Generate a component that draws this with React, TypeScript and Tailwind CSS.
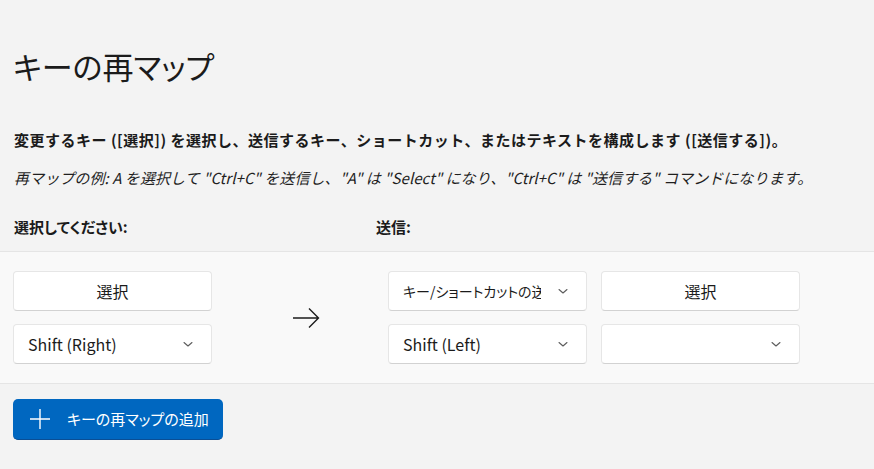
import React from "react";

const font = "font-['Noto_Sans_CJK_JP',sans-serif]";

function Chevron() {
  return (
    <svg width="12" height="12" viewBox="0 0 12 12" className="shrink-0">
      <path d="M2 4.5 L6 8 L10 4.5" fill="none" stroke="#5c5c5c" strokeWidth="1.1" strokeLinecap="round" strokeLinejoin="round" />
    </svg>
  );
}

function Button({ label }: { label: string }) {
  return (
    <div className="h-[40px] w-[199px] rounded-[4px] border border-[#e6e6e6] border-b-[#d2d2d2] bg-white flex items-center justify-center text-[16px] text-[#1b1b1b]">
      {label}
    </div>
  );
}

function Dropdown({ label, small }: { label: string; small?: boolean }) {
  return (
    <div className="h-[40px] w-[199px] rounded-[4px] border border-[#e6e6e6] border-b-[#d2d2d2] bg-white flex items-center pl-[14px] pr-[17px] text-[#1b1b1b]">
      <div className={`w-[138px] overflow-hidden whitespace-nowrap ${small ? "text-[14px]" : "text-[16px]"}`}>{label}</div>
      <div className="flex-1" />
      <Chevron />
    </div>
  );
}

export default function App() {
  return (
    <div className={`${font} w-[874px] h-[469px] bg-[#f3f3f3] text-[#1b1b1b] overflow-hidden [font-feature-settings:'palt']`}>
      <div className="pt-[46px] pl-[13px] text-[31px] leading-[40px]">キーの再マップ</div>
      <div className="pl-[14px] mt-[44px] text-[15px] font-semibold leading-[20px] tracking-[0.5px] [font-feature-settings:normal]">
        変更するキー ([選択]) を選択し、送信するキー、ショートカット、またはテキストを構成します ([送信する])。
      </div>
      <div className="pl-[14px] mt-[18px] text-[15px] italic leading-[20px] tracking-[0.08px] text-[#1f1f1f] [font-feature-settings:normal]">
        再マップの例: A を選択して "Ctrl+C" を送信し、"A" は "Select" になり、"Ctrl+C" は "送信する" コマンドになります。
      </div>
      <div className="pl-[14px] mt-[29px] flex text-[15px] font-semibold leading-[20px]">
        <div className="w-[362px]">選択してください:</div>
        <div>送信:</div>
      </div>
      <div className="mt-[14px] bg-[#f9f9f9] border-y border-[#e5e5e5] pt-[19px] pb-[19px] pl-[13px] flex">
        <div className="flex flex-col gap-[13px]">
          <Button label="選択" />
          <Dropdown label="Shift (Right)" />
        </div>
        <div className="w-[176px] flex items-center pl-[80px]">
          <svg width="28" height="22" viewBox="0 0 28 22">
            <path d="M1 11 H26.5 M17 1.5 L26.5 11 L17 20.5" fill="none" stroke="#1b1b1b" strokeWidth="1.4" />
          </svg>
        </div>
        <div className="flex flex-col gap-[13px]">
          <Dropdown label="キー/ショートカットの送信" small />
          <Dropdown label="Shift (Left)" />
        </div>
        <div className="ml-[14px] flex flex-col gap-[13px]">
          <Button label="選択" />
          <Dropdown label="" />
        </div>
      </div>
      <div className="pl-[13px] mt-[15px]">
        <div className="h-[41px] w-[210px] rounded-[5px] bg-[#0067c0] border-b border-[#0a4e95] flex items-center text-white text-[15px]">
          <svg width="22" height="22" viewBox="0 0 22 22" className="ml-[16px]">
            <path d="M11 1 V21 M1 11 H21" stroke="white" strokeWidth="1.4" />
          </svg>
          <span className="ml-[16px]">キーの再マップの追加</span>
        </div>
      </div>
    </div>
  );
}
